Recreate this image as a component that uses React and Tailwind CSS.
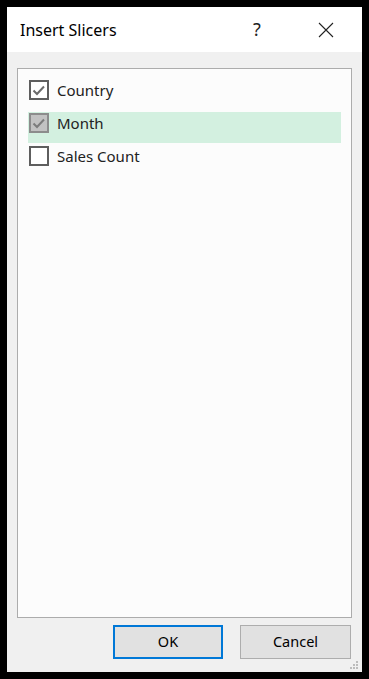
import React from 'react';

const ITEMS = [
  { label: 'Country', checked: true, selected: false },
  { label: 'Month', checked: true, selected: true },
  { label: 'Sales Count', checked: false, selected: false },
];

function CheckBox({ checked, selected }) {
  const border = selected ? '#8c8c8c' : '#5e5e5e';
  const fill = selected ? '#c2c2c2' : '#ffffff';
  const mark = selected ? '#7c7c7c' : '#6b6b6b';
  return (
    <svg width="20" height="20" viewBox="0 0 20 20" className="shrink-0">
      <rect x="1" y="1" width="18" height="18" fill={fill} stroke={border} strokeWidth="2" />
      {checked && (
        <polyline points="4.5,10.5 8,14 15,6.5" fill="none" stroke={mark} strokeWidth="2" />
      )}
    </svg>
  );
}

export default function App() {
  return (
    <div className="h-[679px] w-[369px] bg-black p-[7px] pb-[7px]" style={{ fontFamily: '"Noto Sans", "Open Sans", sans-serif' }}>
      <div className="flex h-[665px] flex-col bg-[#f0f0f0]">
        <div className="flex h-[45px] shrink-0 items-center bg-white pl-[13px] pr-[13px]">
          <span className="flex-1 text-[16px] text-black">Insert Slicers</span>
          <span className="mr-[23px] flex w-[46px] justify-center text-[18px] text-[#222]">?</span>
          <span className="flex w-[46px] justify-center">
            <svg width="16" height="16" viewBox="0 0 16 16">
              <path d="M1 1 L15 15 M15 1 L1 15" stroke="#222" strokeWidth="1.1" fill="none" />
            </svg>
          </span>
        </div>
        <div className="mx-[10px] mt-[16px] h-[550px] shrink-0 border border-[#acacac] bg-[#fcfcfc] pl-[10px] pr-[10px] pt-[10px]">
          {ITEMS.map((item) => (
            <div
              key={item.label}
              className={`mb-[2px] flex h-[31px] items-start pl-px pt-px ${item.selected ? 'bg-[#d3f0e0]' : ''}`}
            >
              <div className="flex h-[20px] items-center gap-[8px]">
                <CheckBox checked={item.checked} selected={item.selected} />
                <span className="text-[15px] text-[#222]">{item.label}</span>
              </div>
            </div>
          ))}
        </div>
        <div className="mt-[7px] flex justify-end gap-[17px] pr-[11px]">
          <button className="h-[34px] w-[110px] border-2 border-[#0078d7] bg-[#e1e1e1] text-[14.5px] text-black">OK</button>
          <button className="h-[34px] w-[111px] border border-[#adadad] bg-[#e1e1e1] text-[14.5px] text-black">Cancel</button>
        </div>
        <div className="flex flex-1 items-end justify-end pb-[3px] pr-[4px]">
          <div className="grid grid-cols-3 gap-px">
            <span className="h-[2px] w-[2px]" />
            <span className="h-[2px] w-[2px]" />
            <span className="h-[2px] w-[2px] bg-[#bcbcbc]" />
            <span className="h-[2px] w-[2px]" />
            <span className="h-[2px] w-[2px] bg-[#bcbcbc]" />
            <span className="h-[2px] w-[2px] bg-[#bcbcbc]" />
            <span className="h-[2px] w-[2px] bg-[#bcbcbc]" />
            <span className="h-[2px] w-[2px] bg-[#bcbcbc]" />
            <span className="h-[2px] w-[2px] bg-[#bcbcbc]" />
          </div>
        </div>
      </div>
    </div>
  );
}
